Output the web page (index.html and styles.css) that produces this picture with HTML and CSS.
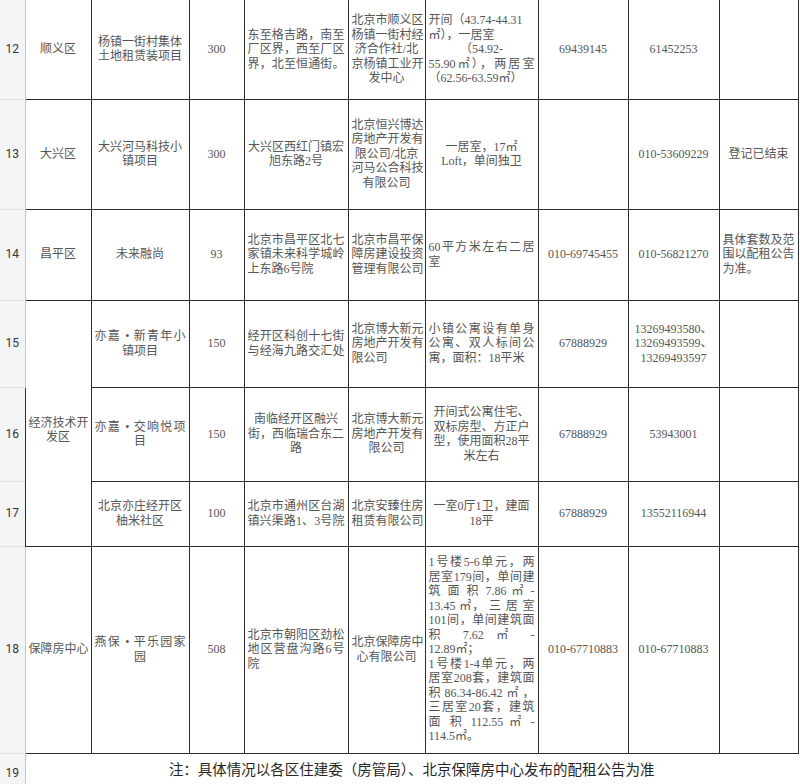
FILE: index.html
```html
<!DOCTYPE html>
<html lang="zh-CN">
<head>
<meta charset="utf-8">
<title>配租项目</title>
<link rel="stylesheet" href="styles.css">
</head>
<body>
<table class="sheet">
  <colgroup>
    <col class="w-rn"><col class="w-b"><col class="w-c"><col class="w-d"><col class="w-e">
    <col class="w-f"><col class="w-g"><col class="w-h"><col class="w-i"><col class="w-j">
  </colgroup>
  <tr class="r12 first">
    <th class="rn">12</th>
    <td>顺义区</td>
    <td><span class="ln">杨镇一街村集体</span><span class="ln">土地租赁装项目</span></td>
    <td>300</td>
    <td class="lt"><span class="ln fill">东至格吉路，南至</span><span class="ln fill">厂区界，西至厂区</span><span class="ln fill">界，北至恒通街。</span></td>
    <td><span class="ln">北京市顺义区</span><span class="ln">杨镇一街村经</span><span class="ln">济合作社/北</span><span class="ln">京杨镇工业开</span><span class="ln">发中心</span></td>
    <td class="lt"><span class="ln">开间（43.74-44.31</span><span class="ln">㎡），一居室</span><span class="ln ctr">（54.92-</span><span class="ln fill">55.90㎡），两居室</span><span class="ln">（62.56-63.59㎡）</span></td>
    <td>69439145</td>
    <td>61452253</td>
    <td></td>
  </tr>
  <tr class="r13">
    <th class="rn">13</th>
    <td>大兴区</td>
    <td><span class="ln">大兴河马科技小</span><span class="ln">镇项目</span></td>
    <td>300</td>
    <td><span class="ln">大兴区西红门镇宏</span><span class="ln">旭东路2号</span></td>
    <td><span class="ln">北京恒兴博达</span><span class="ln">房地产开发有</span><span class="ln">限公司/北京</span><span class="ln">河马公合科技</span><span class="ln">有限公司</span></td>
    <td><span class="ln">一居室，17㎡</span><span class="ln">Loft，单间独卫</span></td>
    <td></td>
    <td>010-53609229</td>
    <td>登记已结束</td>
  </tr>
  <tr class="r14">
    <th class="rn">14</th>
    <td>昌平区</td>
    <td>未来融尚</td>
    <td>93</td>
    <td class="lt"><span class="ln fill">北京市昌平区北七</span><span class="ln fill">家镇未来科学城岭</span><span class="ln">上东路6号院</span></td>
    <td><span class="ln">北京市昌平保</span><span class="ln">障房建设投资</span><span class="ln">管理有限公司</span></td>
    <td class="lt"><span class="ln fill">60平方米左右二居</span><span class="ln">室</span></td>
    <td>010-69745455</td>
    <td>010-56821270</td>
    <td class="lt"><span class="ln">具体套数及范</span><span class="ln">围以配租公告</span><span class="ln">为准。</span></td>
  </tr>
  <tr class="r15">
    <th class="rn">15</th>
    <td rowspan="3" class="merged"><span class="ln fill">经济技术开</span><span class="ln">发区</span></td>
    <td><span class="ln fill">亦嘉 • 新青年小</span><span class="ln">镇项目</span></td>
    <td>150</td>
    <td class="lt"><span class="ln fill">经开区科创十七街</span><span class="ln fill">与经海九路交汇处</span></td>
    <td class="lt"><span class="ln">北京博大新元</span><span class="ln">房地产开发有</span><span class="ln">限公司</span></td>
    <td class="lt"><span class="ln fill">小镇公寓设有单身</span><span class="ln fill">公寓、双人标间公</span><span class="ln">寓，面积：18平米</span></td>
    <td>67888929</td>
    <td><span class="ln">13269493580、</span><span class="ln">13269493599、</span><span class="ln">13269493597</span></td>
    <td></td>
  </tr>
  <tr class="r16">
    <th class="rn">16</th>
    <td><span class="ln fill">亦嘉 • 交响悦项</span><span class="ln">目</span></td>
    <td>150</td>
    <td><span class="ln">南临经开区融兴</span><span class="ln">街，西临瑞合东二</span><span class="ln">路</span></td>
    <td><span class="ln">北京博大新元</span><span class="ln">房地产开发有</span><span class="ln">限公司</span></td>
    <td><span class="ln">开间式公寓住宅、</span><span class="ln">双标房型、方正户</span><span class="ln">型，使用面积28平</span><span class="ln">米左右</span></td>
    <td>67888929</td>
    <td>53943001</td>
    <td></td>
  </tr>
  <tr class="r17">
    <th class="rn">17</th>
    <td><span class="ln">北京亦庄经开区</span><span class="ln">柚米社区</span></td>
    <td>100</td>
    <td class="lt"><span class="ln fill">北京市通州区台湖</span><span class="ln fill">镇兴渠路1、3号院</span></td>
    <td><span class="ln">北京安臻住房</span><span class="ln">租赁有限公司</span></td>
    <td><span class="ln">一室0厅1卫，建面</span><span class="ln">18平</span></td>
    <td>67888929</td>
    <td>13552116944</td>
    <td></td>
  </tr>
  <tr class="r18">
    <th class="rn">18</th>
    <td><span class="ln fill">保障房中心</span></td>
    <td><span class="ln fill">燕保 • 平乐园家</span><span class="ln">园</span></td>
    <td>508</td>
    <td class="lt"><span class="ln fill">北京市朝阳区劲松</span><span class="ln fill">地区营盘沟路6号</span><span class="ln">院</span></td>
    <td><span class="ln">北京保障房中</span><span class="ln">心有限公司</span></td>
    <td class="lt"><span class="ln fill">1号楼5-6单元，两</span><span class="ln fill">居室179间，单间建</span><span class="ln fill">筑 面 积 7.86 ㎡ -</span><span class="ln fill">13.45 ㎡， 三 居 室</span><span class="ln fill">101间，单间建筑面</span><span class="ln fill">积 7.62 ㎡ -</span><span class="ln">12.89㎡；</span><span class="ln fill">1号楼1-4单元，两</span><span class="ln fill">居室208套，建筑面</span><span class="ln fill">积86.34-86.42㎡，</span><span class="ln fill">三居室20套，建筑</span><span class="ln fill">面 积 112.55 ㎡ -</span><span class="ln">114.5㎡。</span></td>
    <td>010-67710883</td>
    <td>010-67710883</td>
    <td></td>
  </tr>
  <tr class="r19">
    <th class="rn">19</th>
    <td class="note" colspan="9">注：具体情况以各区住建委（房管局）、北京保障房中心发布的配租公告为准</td>
  </tr>
</table>
</body>
</html>
```

FILE: styles.css
```css
html, body {
  margin: 0;
  padding: 0;
  background: #ffffff;
  overflow: hidden;
}

.sheet {
  border-collapse: collapse;
  table-layout: fixed;
  width: 798px;
  font-family: "Liberation Serif", "Noto Sans CJK SC", serif;
  font-size: 12px;
  line-height: 14.5px;
  color: #555555;
}

.w-rn { width: 25px; }
.w-b { width: 66px; }
.w-c { width: 98px; }
.w-d { width: 55px; }
.w-e { width: 104px; }
.w-f { width: 77px; }
.w-g { width: 113px; }
.w-h { width: 90px; }
.w-i { width: 91px; }
.w-j { width: 79px; }

.sheet td {
  border: 1px solid #2c2c2c;
  padding: 0 3px;
  text-align: center;
  vertical-align: middle;
  overflow: hidden;
}

.sheet th.rn {
  background: #f3f4f6;
  border-right: 1px solid #c4c7cc;
  border-bottom: 1px solid #dfe1e5;
  padding: 0;
  font-family: Roboto, "Liberation Sans", sans-serif;
  font-weight: normal;
  font-size: 12px;
  color: #333333;
  text-align: center;
  vertical-align: middle;
}

.first td { border-top: none; }

.r12 { height: 99px; }
.r13 { height: 110px; }
.r14 { height: 91px; }
.r15 { height: 87px; }
.r16 { height: 94px; }
.r17 { height: 65px; }
.r18 { height: 207px; }
.r19 { height: 40px; }

.ln {
  display: block;
  white-space: nowrap;
}

.sheet td.lt { text-align: left; }

.sheet td.merged { padding-top: 14px; }

.ln.fill {
  text-align: justify;
  text-align-last: justify;
}

.ln.ctr { text-align: center; }

.sheet td.note {
  border-right: none;
  border-bottom: none;
  font-family: "Noto Sans CJK SC", sans-serif;
  font-size: 14.5px;
  color: #262626;
  vertical-align: top;
  padding-top: 8px;
}
```
